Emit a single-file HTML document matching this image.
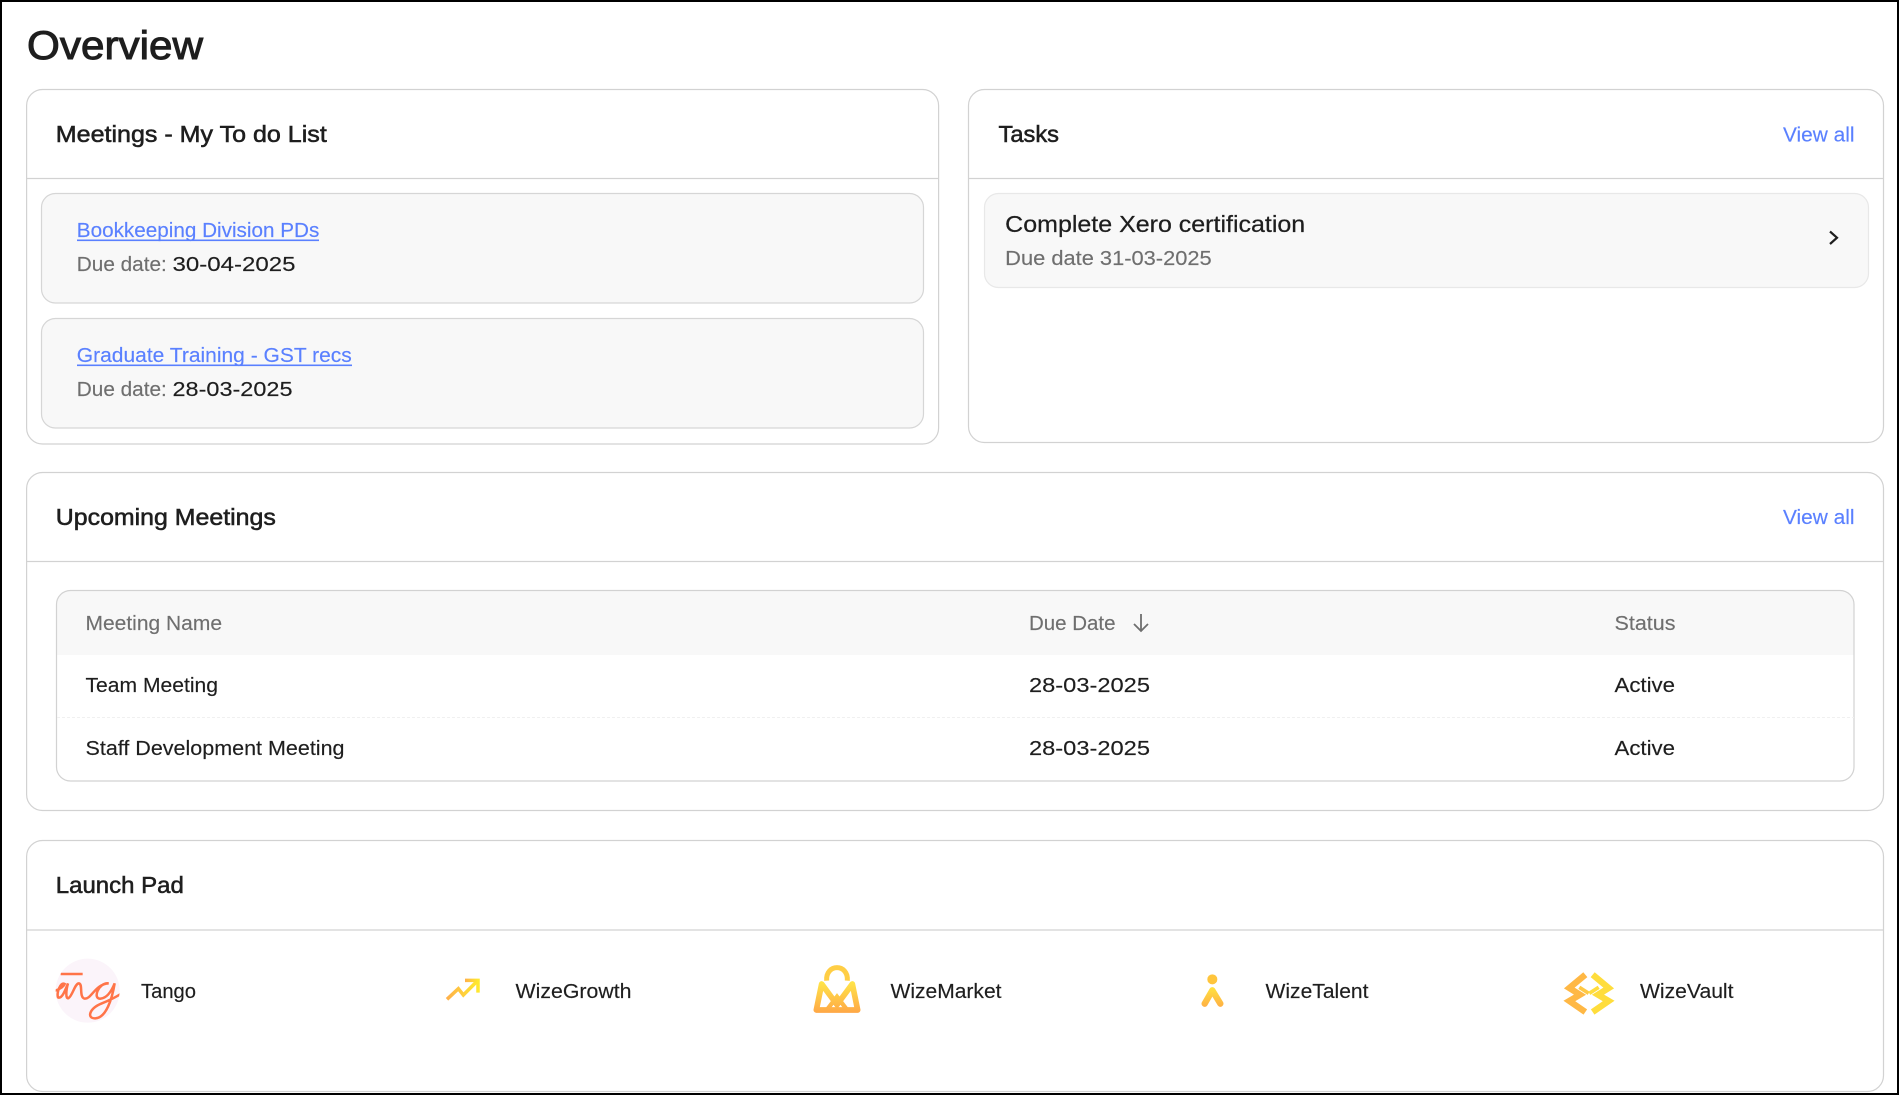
<!DOCTYPE html>
<html lang="en"><head><meta charset="utf-8"><title>Overview</title>
<style>
html,body{margin:0;padding:0;background:#fff;width:1899px;height:1095px;overflow:hidden}
svg{display:block}
text{font-family:"Liberation Sans",Arial,sans-serif;font-size:20.5px;fill:#1e1e1e;white-space:pre;stroke:#1e1e1e;stroke-width:.15px}
.t{font-size:23px;stroke-width:.55px}
.g{fill:#6f6f6f;stroke:#6f6f6f}
.b{fill:#5a80ff;stroke:#5a80ff}
.l{fill:#5a80ff;stroke:none}
.c{fill:#fff;stroke:#d2d2d2;stroke-width:1.2}
.i{fill:#f8f8f8;stroke:#d6d6d6;stroke-width:1.2}
.d{stroke:#d2d2d2;stroke-width:1.2}
.ic{filter:blur(.35px)}
</style></head>
<body>
<svg width="1899" height="1095" viewBox="0 0 1899 1095" xmlns="http://www.w3.org/2000/svg">
<defs>
<linearGradient id="gh" x1="0" y1="0" x2="1" y2="0"><stop offset="0" stop-color="#ffb04a"/><stop offset="1" stop-color="#ffe92e"/></linearGradient>
<linearGradient id="gv" gradientUnits="userSpaceOnUse" x1="0" y1="95" x2="0" y2="190"><stop offset="0" stop-color="#ffe548"/><stop offset="1" stop-color="#ffa646"/></linearGradient>
<linearGradient id="gt" gradientUnits="userSpaceOnUse" x1="0" y1="115" x2="0" y2="170"><stop offset="0" stop-color="#ffe040"/><stop offset="1" stop-color="#ffb044"/></linearGradient>
<clipPath id="tc"><circle cx="173" cy="152" r="96"/></clipPath>
</defs>
<rect x="1" y="1" width="1897" height="1093" fill="#fff" stroke="#000" stroke-width="2"/>

<text x="27" y="59" style="font-size:40px;stroke-width:1px" textLength="176" lengthAdjust="spacingAndGlyphs">Overview</text>

<!-- Meetings card -->
<rect class="c" x="26.6" y="89.5" width="912" height="354.5" rx="16"/>
<line class="d" x1="27" y1="178.5" x2="938.5" y2="178.5"/>
<text class="t" x="55.8" y="142" textLength="271" lengthAdjust="spacingAndGlyphs">Meetings - My To do List</text>
<rect class="i" x="41.5" y="193.5" width="882" height="109.5" rx="14"/>
<text class="b" x="76.8" y="237" textLength="242.5" lengthAdjust="spacingAndGlyphs">Bookkeeping Division PDs</text>
<rect class="l" x="77" y="239.5" width="242" height="1.6"/>
<text class="g" x="76.8" y="271" textLength="90" lengthAdjust="spacingAndGlyphs">Due date:</text>
<text x="172.5" y="271" textLength="123" lengthAdjust="spacingAndGlyphs">30-04-2025</text>
<rect class="i" x="41.5" y="318.5" width="882" height="109.5" rx="14"/>
<text class="b" x="76.8" y="362" textLength="275" lengthAdjust="spacingAndGlyphs">Graduate Training - GST recs</text>
<rect class="l" x="77" y="364.5" width="275" height="1.6"/>
<text class="g" x="76.8" y="396" textLength="90" lengthAdjust="spacingAndGlyphs">Due date:</text>
<text x="172.5" y="396" textLength="120" lengthAdjust="spacingAndGlyphs">28-03-2025</text>

<!-- Tasks card -->
<rect class="c" x="968.5" y="89.5" width="915" height="353" rx="16"/>
<line class="d" x1="969" y1="178.5" x2="1883" y2="178.5"/>
<text class="t" x="998.5" y="142" textLength="60.5" lengthAdjust="spacingAndGlyphs">Tasks</text>
<text class="b" x="1783" y="141.5" textLength="71.5" lengthAdjust="spacingAndGlyphs">View all</text>
<rect x="984.5" y="193.5" width="884" height="94" rx="14" fill="#f8f8f8" stroke="#e8e8e8" stroke-width="1.2"/>
<text x="1005.2" y="232" style="font-size:23.5px;stroke-width:.25px" textLength="300" lengthAdjust="spacingAndGlyphs">Complete Xero certification</text>
<text class="g" x="1005.2" y="265" textLength="206.5" lengthAdjust="spacingAndGlyphs">Due date 31-03-2025</text>
<path d="M1830 231.5 L1837 237.7 L1830 244" fill="none" stroke="#1e1e1e" stroke-width="2.2"/>

<!-- Upcoming Meetings -->
<rect class="c" x="26.6" y="472.5" width="1856.9" height="338" rx="16"/>
<line class="d" x1="27" y1="561.5" x2="1883" y2="561.5"/>
<text class="t" x="55.8" y="525" textLength="220" lengthAdjust="spacingAndGlyphs">Upcoming Meetings</text>
<text class="b" x="1783" y="524" textLength="71.5" lengthAdjust="spacingAndGlyphs">View all</text>
<rect x="56.5" y="590.5" width="1797.5" height="190.5" rx="14" fill="#fff"/>
<path d="M56.5 655 V604.5 a14 14 0 0 1 14 -14 H1840 a14 14 0 0 1 14 14 V655 Z" fill="#f8f8f8"/>
<rect x="56.5" y="590.5" width="1797.5" height="190.5" rx="14" fill="none" stroke="#d2d2d2" stroke-width="1.2"/>
<line x1="57" y1="717.5" x2="1854" y2="717.5" stroke="#f0f0f0" stroke-width="1" stroke-dasharray="3 2"/>
<text class="g" x="85.5" y="630" textLength="136.5" lengthAdjust="spacingAndGlyphs">Meeting Name</text>
<text class="g" x="1029" y="630" textLength="86.5" lengthAdjust="spacingAndGlyphs">Due Date</text>
<path d="M1141 614 V631 M1134 624 L1141 631 L1148 624" fill="none" stroke="#6f6f6f" stroke-width="1.8"/>
<text class="g" x="1614.5" y="630" textLength="61" lengthAdjust="spacingAndGlyphs">Status</text>
<text x="85.5" y="692" textLength="132.5" lengthAdjust="spacingAndGlyphs">Team Meeting</text>
<text x="1029" y="692" textLength="121" lengthAdjust="spacingAndGlyphs">28-03-2025</text>
<text x="1614.5" y="692" textLength="60.5" lengthAdjust="spacingAndGlyphs">Active</text>
<text x="85.5" y="755" textLength="259" lengthAdjust="spacingAndGlyphs">Staff Development Meeting</text>
<text x="1029" y="755" textLength="121" lengthAdjust="spacingAndGlyphs">28-03-2025</text>
<text x="1614.5" y="755" textLength="60.5" lengthAdjust="spacingAndGlyphs">Active</text>

<!-- Launch Pad -->
<rect class="c" x="26.6" y="840.5" width="1856.9" height="251" rx="16"/>
<line class="d" x1="27" y1="930" x2="1883" y2="930"/>
<text class="t" x="55.8" y="893" textLength="128" lengthAdjust="spacingAndGlyphs">Launch Pad</text>

<text x="141" y="998" textLength="55" lengthAdjust="spacingAndGlyphs">Tango</text>
<text x="515.5" y="998" textLength="116" lengthAdjust="spacingAndGlyphs">WizeGrowth</text>
<text x="890.5" y="998" textLength="111" lengthAdjust="spacingAndGlyphs">WizeMarket</text>
<text x="1265.5" y="998" textLength="103" lengthAdjust="spacingAndGlyphs">WizeTalent</text>
<text x="1640" y="998" textLength="93.5" lengthAdjust="spacingAndGlyphs">WizeVault</text>

<!-- Tango logo mark -->
<g class="ic" transform="translate(30 940) scale(.33333)">
<circle cx="173" cy="152" r="96" fill="#fbf4fa"/>
<g clip-path="url(#tc)" fill="none" stroke="#ff7448" stroke-width="7.5" stroke-linecap="round">
<path d="M92 102 H158" stroke-linecap="butt"/>
<path d="M64 156 C84 150 100 142 104 132 C90 124 80 160 84 172 C96 178 106 150 114 130 C108 150 106 180 116 174 C128 166 134 132 146 130 C160 130 146 172 164 176 C184 178 196 132 236 130 C206 126 186 178 212 176 C232 174 246 150 254 130 C246 178 228 234 196 235 C170 236 176 206 216 190 C240 180 262 170 284 154"/>
</g>
</g>

<!-- WizeGrowth -->
<g class="ic" transform="translate(420 940) scale(.33333)" fill="none" stroke="url(#gh)" stroke-width="10.5">
<path d="M81 178 L115 146 L130 165 L172 123"/>
<path d="M135 121 H174 V158"/>
</g>

<!-- WizeMarket -->
<g class="ic" transform="translate(790 950) scale(.33333)">
<path d="M110 92 C106 40 176 40 172 92" fill="none" stroke="#ffce45" stroke-width="15"/>
<path d="M95 102 L79 180 H203 L187 102 L141 164 Z" fill="none" stroke="url(#gv)" stroke-width="17" stroke-linejoin="round"/>
<path d="M112 178 L141 140 L170 178" fill="none" stroke="url(#gv)" stroke-width="13"/>
</g>

<!-- WizeTalent -->
<g class="ic" transform="translate(1170 950) scale(.33333)">
<circle cx="127" cy="88" r="15" fill="#ffc53c"/>
<path d="M104 161 L127 121 L151 161" fill="none" stroke="url(#gt)" stroke-width="19" stroke-linecap="round" stroke-linejoin="round"/>
</g>

<!-- WizeVault -->
<g class="ic" transform="translate(1540 950) scale(.33333)" fill="none" stroke-width="19">
<path d="M136 74 L88 114 L120 134 L88 153 L136 186" stroke="#ffb845"/>
<path d="M158 74 L206 114 L174 134 L206 153 L158 186" stroke="#ffdd3c"/>
<path d="M118 112 L146 130" stroke="#ffc844" stroke-width="11"/>
<path d="M176 112 L148 130" stroke="#ffdc3e" stroke-width="11"/>
</g>
</svg>
</body></html>
